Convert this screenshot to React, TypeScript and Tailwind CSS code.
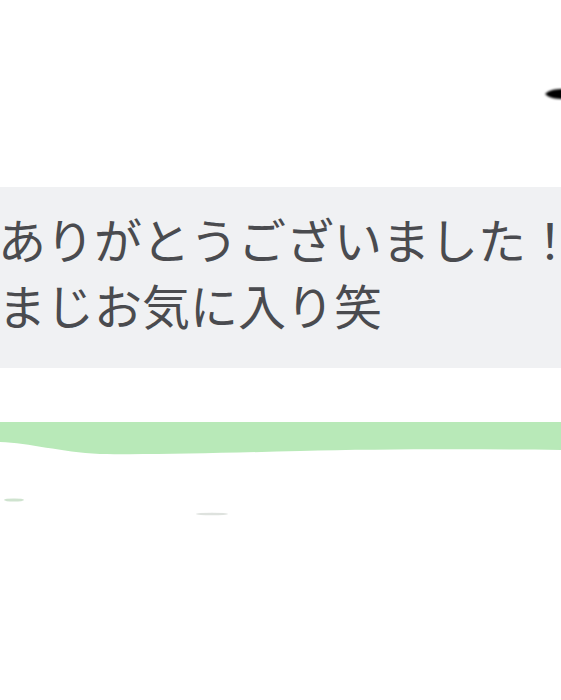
import React from "react";

export default function App() {
  return (
    <div className="w-[561px] h-[700px] bg-white overflow-hidden flex flex-col">
      <div className="h-[187px] flex justify-end items-start pt-[86px]">
        <svg width="20" height="16" viewBox="0 0 20 16" className="-mr-[2px]">
          <defs>
            <filter id="b" x="-50%" y="-50%" width="200%" height="200%">
              <feGaussianBlur stdDeviation="1.2" />
            </filter>
          </defs>
          <path d="M2 8 C 6 4, 12 3, 20 3 L 20 13 C 12 13, 6 12, 2 8 Z" fill="#000" filter="url(#b)" />
        </svg>
      </div>
      <div
        className="h-[181px] bg-[#f0f1f3] pt-[18px] -ml-[2px] text-[48px] leading-[66px] text-[#4a4b4f] whitespace-nowrap"
        style={{ fontFamily: '"Noto Sans CJK JP", "Noto Sans", sans-serif' }}
      >
        <div>ありがとうございました！</div>
        <div>まじお気に入り笑</div>
      </div>
      <div className="h-[54px]" />
      <svg width="561" height="40" viewBox="0 0 561 40" className="block">
        <path
          d="M0 0 L561 0 L561 28 C 480 27, 380 27, 300 29 C 220 31, 150 33, 100 32 C 60 30, 30 21, 0 20 Z"
          fill="#b8e9b8"
        />
      </svg>
      <svg width="561" height="60" viewBox="0 0 561 60" className="block">
        <ellipse cx="14" cy="38" rx="10" ry="1.6" fill="#c3dcc3" opacity="0.8" />
        <ellipse cx="212" cy="52" rx="16" ry="1.3" fill="#d0d6d0" opacity="0.7" />
      </svg>
    </div>
  );
}
